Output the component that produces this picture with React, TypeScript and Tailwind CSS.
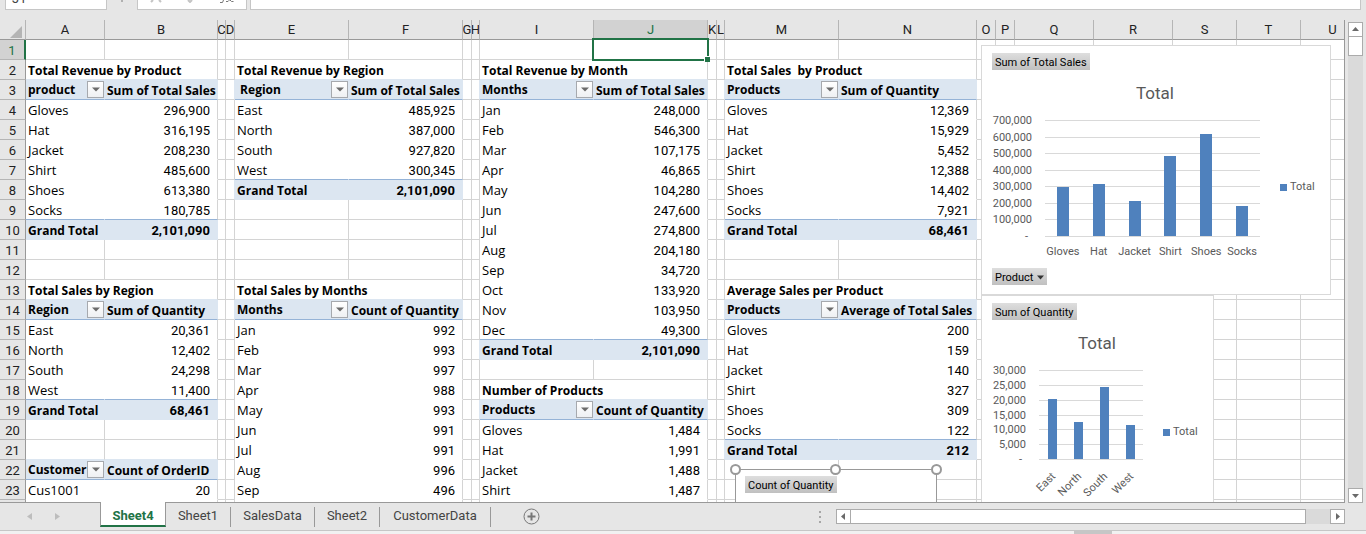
import React from "react";

type Kind = "grid" | "title" | "head" | "body" | "total";

interface Pivot {
  col: number;
  row: number;
  title?: string;
  heads: [string, string];
  rows: [string, string][];
  total?: string;
}

const columns: { name: string; width: string }[] = [
  { name: "A", width: "w-[79px]" },
  { name: "B", width: "w-[113px]" },
  { name: "C", width: "w-[8px]" },
  { name: "D", width: "w-[9px]" },
  { name: "E", width: "w-[114px]" },
  { name: "F", width: "w-[114px]" },
  { name: "G", width: "w-[9px]" },
  { name: "H", width: "w-[8px]" },
  { name: "I", width: "w-[114px]" },
  { name: "J", width: "w-[114px]" },
  { name: "K", width: "w-[9px]" },
  { name: "L", width: "w-[8px]" },
  { name: "M", width: "w-[114px]" },
  { name: "N", width: "w-[138px]" },
  { name: "O", width: "w-[19px]" },
  { name: "P", width: "w-[19px]" },
  { name: "Q", width: "w-[79px]" },
  { name: "R", width: "w-[79px]" },
  { name: "S", width: "w-[64px]" },
  { name: "T", width: "w-[64px]" },
  { name: "U", width: "w-[64px]" },
];

const pivots: Pivot[] = [
  {
    col: 0, row: 3, title: "Total Revenue by Product", heads: ["product", "Sum of Total Sales"],
    rows: [["Gloves", "296,900"], ["Hat", "316,195"], ["Jacket", "208,230"], ["Shirt", "485,600"], ["Shoes", "613,380"], ["Socks", "180,785"]],
    total: "2,101,090",
  },
  {
    col: 0, row: 14, title: "Total Sales by Region", heads: ["Region", "Sum of Quantity"],
    rows: [["East", "20,361"], ["North", "12,402"], ["South", "24,298"], ["West", "11,400"]],
    total: "68,461",
  },
  { col: 0, row: 22, heads: ["Customer", "Count of OrderID"], rows: [["Cus1001", "20"], ["", ""]] },
  {
    col: 4, row: 3, title: "Total Revenue by Region", heads: [" Region", "Sum of Total Sales"],
    rows: [["East", "485,925"], ["North", "387,000"], ["South", "927,820"], ["West", "300,345"]],
    total: "2,101,090",
  },
  {
    col: 4, row: 14, title: "Total Sales by Months", heads: ["Months", "Count of Quantity"],
    rows: [["Jan", "992"], ["Feb", "993"], ["Mar", "997"], ["Apr", "988"], ["May", "993"], ["Jun", "991"], ["Jul", "991"], ["Aug", "996"], ["Sep", "496"], ["", ""]],
  },
  {
    col: 8, row: 3, title: "Total Revenue by Month", heads: ["Months", "Sum of Total Sales"],
    rows: [["Jan", "248,000"], ["Feb", "546,300"], ["Mar", "107,175"], ["Apr", "46,865"], ["May", "104,280"], ["Jun", "247,600"], ["Jul", "274,800"], ["Aug", "204,180"], ["Sep", "34,720"], ["Oct", "133,920"], ["Nov", "103,950"], ["Dec", "49,300"]],
    total: "2,101,090",
  },
  {
    col: 8, row: 19, title: "Number of Products", heads: ["Products", "Count of Quantity"],
    rows: [["Gloves", "1,484"], ["Hat", "1,991"], ["Jacket", "1,488"], ["Shirt", "1,487"], ["", ""]],
  },
  {
    col: 12, row: 3, title: "Total Sales  by Product", heads: ["Products", "Sum of Quantity"],
    rows: [["Gloves", "12,369"], ["Hat", "15,929"], ["Jacket", "5,452"], ["Shirt", "12,388"], ["Shoes", "14,402"], ["Socks", "7,921"]],
    total: "68,461",
  },
  {
    col: 12, row: 14, title: "Average Sales per Product", heads: ["Products", "Average of Total Sales"],
    rows: [["Gloves", "200"], ["Hat", "159"], ["Jacket", "140"], ["Shirt", "327"], ["Shoes", "309"], ["Socks", "122"]],
    total: "212",
  },
];

interface Cell {
  kind: Kind;
  text: string;
  label: boolean;
}

const cells = new Map<string, Cell>();
const put = (row: number, col: number, kind: Kind, pair: [string, string]) => {
  cells.set(`${row},${col}`, { kind, text: pair[0], label: true });
  cells.set(`${row},${col + 1}`, { kind, text: pair[1], label: false });
};
pivots.forEach((p) => {
  if (p.title) cells.set(`${p.row - 1},${p.col}`, { kind: "title", text: p.title, label: true });
  put(p.row, p.col, "head", p.heads);
  p.rows.forEach((r, i) => put(p.row + 1 + i, p.col, "body", r));
  if (p.total) put(p.row + 1 + p.rows.length, p.col, "total", ["Grand Total", p.total]);
});

const kindAt = (row: number, col: number): Kind => cells.get(`${row},${col}`)?.kind ?? "grid";
const filled = (k: Kind) => k === "head" || k === "total";

function bottomEdge(row: number, col: number) {
  const own = kindAt(row, col);
  const below = kindAt(row + 1, col);
  if (own === "head" || below === "total") return "border-b-[#95b3d7]";
  if (own === "total" || below === "head") return "border-b-[#dce6f1]";
  if (own === "body") return "border-b-white";
  return "border-b-[#d4d4d4]";
}

function rightEdge(row: number, col: number) {
  const own = kindAt(row, col);
  const next = kindAt(row, col + 1);
  if (filled(own) || filled(next)) return "border-r-[#dce6f1]";
  if (own === "body" && next === "body") return "border-r-white";
  return "border-r-[#d4d4d4]";
}

function FilterButton({ name }: { name: string }) {
  return (
    <button type="button" aria-label={`Filter ${name.trim()}`} className="flex h-[17px] w-[17px] shrink-0 items-center justify-center border border-[#a6a9ae] bg-linear-to-b from-white to-[#eef0f3]">
      <svg width="8" height="5" viewBox="0 0 8 5"><path d="M0 0.5h8L4 4.5z" fill="#6b6b6b" /></svg>
    </button>
  );
}

function SheetCell({ row, col }: { row: number; col: number }) {
  const cell = cells.get(`${row},${col}`);
  const kind = cell?.kind ?? "grid";
  const numeric = cell !== undefined && !cell.label && kind !== "head";
  const filterable = cell !== undefined && cell.label && kind === "head";
  const lowered = numeric || (kind !== "body" && !filterable);
  const weight = kind !== "body" ? "font-bold" : "font-normal";
  const face = numeric
    ? "justify-end pr-[7px] text-[13px]"
    : kind === "body"
      ? "pl-[2px] font-['Open_Sans',sans-serif] text-[13px]"
      : "pl-[2px] font-['Open_Sans',sans-serif] text-[12px]";
  const fill = filled(kind) ? "bg-[#dce6f1]" : "bg-white";
  return (
    <td colSpan={kind === "title" ? 2 : 1} className={`h-5 overflow-hidden border-r border-b p-0 ${fill} ${rightEdge(row, kind === "title" ? col + 1 : col)} ${bottomEdge(row, col)}`}>
      {cell && (
        <div className={`flex h-[19px] items-center whitespace-pre leading-[18px] ${lowered ? "pt-[2px]" : ""} ${weight} ${face}`}>
          {filterable ? (
            <>
              <span className="h-[19px] min-w-0 flex-1 overflow-hidden pt-px">{cell.text}</span>
              <FilterButton name={cell.text} />
            </>
          ) : (
            cell.text
          )}
        </div>
      )}
    </td>
  );
}

function Sheet() {
  const rows = Array.from({ length: 24 }, (_, i) => i + 1);
  return (
    <table className="w-[1365px] table-fixed border-separate border-spacing-0 text-[13px] leading-[19px] text-black">
      <colgroup>
        <col className="w-[26px]" />
        {columns.map((c) => <col key={c.name} className={c.width} />)}
      </colgroup>
      <thead>
        <tr>
          <th aria-label="Select all" className="h-5 border-r border-b border-r-[#b5b5b5] border-b-[#999999] bg-[#e6e6e6] p-0">
            <svg className="ml-2.5 mt-1" width="12" height="12" viewBox="0 0 12 12"><path d="M12 0v12H0z" fill="#b4b4b4" /></svg>
          </th>
          {columns.map((c) => (
            <th key={c.name} scope="col" className={`h-5 overflow-hidden border-r border-b border-r-[#b5b5b5] border-b-[#999999] p-0 font-normal ${c.name === "J" ? "bg-[#d2d2d2] text-[#217346]" : "bg-[#e6e6e6] text-[#222222]"}`}>
              <div className="flex h-[19px] items-center justify-center">{c.name}</div>
            </th>
          ))}
        </tr>
      </thead>
      <tbody>
        {rows.map((row) => (
          <tr key={row}>
            <th scope="row" className={`h-5 border-b border-b-[#b5b5b5] p-0 text-center font-normal ${row === 1 ? "border-r-2 border-r-[#217346] bg-[#d2d2d2] text-[#217346]" : "border-r border-r-[#999999] bg-[#e6e6e6] text-[#222222]"}`}>
              <div className="h-[19px] pt-0.5 leading-[18px]">{row < 24 ? row : ""}</div>
            </th>
            {columns.map((c, col) =>
              col > 0 && kindAt(row, col - 1) === "title" ? null : <SheetCell key={c.name} row={row} col={col} />
            )}
          </tr>
        ))}
      </tbody>
    </table>
  );
}

function FieldButton({ children, arrow, place }: { children: string; arrow?: boolean; place: string }) {
  return (
    <button type="button" className={`absolute flex h-[17px] items-center gap-1 bg-linear-to-b from-[#dedede] to-[#c0c0c0] px-[3px] pt-0.5 text-[11px] leading-[15px] whitespace-nowrap text-black ${place}`}>
      {children}
      {arrow && <svg width="7" height="5" viewBox="0 0 7 5"><path d="M0 0.5h7L3.5 4.5z" fill="#333" /></svg>}
    </button>
  );
}

interface ChartProps {
  label: string;
  width: number;
  height: number;
  ticks: string[];
  max: number;
  plot: { left: number; right: number; top: number; bottom: number };
  labelEnd: number;
  title: { x: number; y: number };
  legend: { x: number; y: number };
  barWidth: number;
  slanted?: boolean;
  data: [string, number][];
}

function BarChart({ label, width, height, ticks, max, plot, labelEnd, title, legend, barWidth, slanted, data }: ChartProps) {
  const step = (plot.bottom - plot.top) / (ticks.length - 1);
  const band = (plot.right - plot.left) / data.length;
  return (
    <svg role="img" aria-label={label} width={width} height={height} className="block fill-[#595959] text-[11px]">
      <text x={title.x} y={title.y} textAnchor="middle" className="text-[17px]">Total</text>
      {ticks.map((t, i) => {
        const y = Math.round(plot.top + i * step);
        return (
          <g key={t}>
            <rect x={plot.left} y={y} width={plot.right - plot.left} height="1" fill="#d9d9d9" />
            <text x={t === "-" ? labelEnd - 4 : labelEnd} y={y + 4} textAnchor="end">{t}</text>
          </g>
        );
      })}
      {data.map(([name, value], i) => {
        const center = plot.left + band * (i + 0.5);
        const h = Math.round((value / max) * (plot.bottom - plot.top));
        return (
          <g key={name}>
            <rect x={Math.round(center - barWidth / 2)} y={plot.bottom - h} width={barWidth} height={h} fill="#4f81bd" />
            {slanted ? (
              <text transform={`translate(${center + 4} ${plot.bottom + 18}) rotate(-45)`} textAnchor="end">{name}</text>
            ) : (
              <text x={center} y={plot.bottom + 19} textAnchor="middle">{name}</text>
            )}
          </g>
        );
      })}
      <rect x={legend.x} y={legend.y} width="7" height="7" fill="#4f81bd" />
      <text x={legend.x + 10} y={legend.y + 6}>Total</text>
    </svg>
  );
}

function Charts() {
  return (
    <>
      <figure className="absolute top-[275px] left-[981px] border border-[#d9d9d9] bg-white">
        <BarChart
          label="Sum of Quantity by region" width={231} height={240}
          ticks={["30,000", "25,000", "20,000", "15,000", "10,000", "5,000", "-"]} max={30000}
          plot={{ left: 57, right: 161, top: 74, bottom: 163 }} labelEnd={44}
          title={{ x: 115, y: 53 }} legend={{ x: 181, y: 133 }} barWidth={9} slanted
          data={[["East", 20361], ["North", 12402], ["South", 24298], ["West", 11400]]}
        />
        <FieldButton place="top-[7px] left-[10px]">Sum of Quantity</FieldButton>
      </figure>
      <figure className="absolute top-[25px] left-[981px] border border-[#d9d9d9] bg-white">
        <BarChart
          label="Sum of Total Sales by product" width={348} height={248}
          ticks={["700,000", "600,000", "500,000", "400,000", "300,000", "200,000", "100,000", "-"]} max={700000}
          plot={{ left: 63, right: 278, top: 74, bottom: 190 }} labelEnd={50}
          title={{ x: 173, y: 53 }} legend={{ x: 298, y: 138 }} barWidth={12}
          data={[["Gloves", 296900], ["Hat", 316195], ["Jacket", 208230], ["Shirt", 485600], ["Shoes", 613380], ["Socks", 180785]]}
        />
        <FieldButton place="top-[7px] left-[10px]">Sum of Total Sales</FieldButton>
        <FieldButton arrow place="top-[222px] left-[10px]">Product</FieldButton>
      </figure>
      <figure className="absolute top-[449px] left-[735px] h-40 w-[202px] border border-[#999999] bg-white">
        <FieldButton place="top-[6px] left-[9px]">Count of Quantity</FieldButton>
        <span className="absolute -top-1.5 -left-1.5 size-[11px] rounded-full border-2 border-[#999999] bg-white" />
        <span className="absolute -top-1.5 left-[94px] size-[11px] rounded-full border-2 border-[#999999] bg-white" />
        <span className="absolute -top-1.5 -right-1.5 size-[11px] rounded-full border-2 border-[#999999] bg-white" />
      </figure>
    </>
  );
}

function FormulaBar() {
  return (
    <div className="flex h-5 shrink-0 pl-[5px] pr-[5px]">
      <div className="flex h-2.5 w-[102px] items-end overflow-hidden border-b border-x border-[#c6c6c6] bg-white">
        <input aria-label="Name box" defaultValue="J1" className="h-[22px] w-full shrink-0 bg-transparent pl-1.5 text-[13px] text-[#444444] outline-none" />
      </div>
      <div className="flex h-2.5 w-[30px] items-start justify-center"><span className="h-0.5 w-0.5 bg-[#b0b0b0]" /></div>
      <div className="flex h-2.5 w-[110px] items-start justify-between overflow-hidden border-x border-b border-[#c6c6c6] bg-white pr-3 pl-3">
        <button type="button" aria-label="Cancel">
          <svg className="block" width="12" height="3" viewBox="0 0 12 3"><path d="M1 2l2-2M11 2L9 0" stroke="#c4c4c4" strokeWidth="2" /></svg>
        </button>
        <button type="button" aria-label="Enter">
          <svg className="block" width="12" height="3" viewBox="0 0 12 3"><path d="M3 0l2 2 2-2" stroke="#c4c4c4" strokeWidth="2" fill="none" /></svg>
        </button>
        <button type="button" aria-label="Insert function">
          <svg className="block" width="14" height="4" viewBox="0 0 14 4" fill="none" stroke="#777777"><path d="M0 2.5h2.5L3.5 0M6 1.5h2L9.5 0M10 0l1.5 1.5h2" /></svg>
        </button>
      </div>
      <div className="ml-[3px] flex h-2.5 flex-1 items-end overflow-hidden border-x border-b border-[#c6c6c6] bg-white">
        <input aria-label="Formula" className="h-[22px] w-full shrink-0 bg-transparent outline-none" />
      </div>
    </div>
  );
}

function ScrollButton({ name, path }: { name: string; path: string }) {
  return (
    <button type="button" aria-label={name} className="flex size-[15px] shrink-0 items-center justify-center border border-[#ababab] bg-white">
      <svg width="7" height="7" viewBox="0 0 7 7"><path d={path} fill="#6a6a6a" /></svg>
    </button>
  );
}

const tabs: { name: string; width: string }[] = [
  { name: "Sheet1", width: "w-[65px]" },
  { name: "SalesData", width: "w-[84px]" },
  { name: "Sheet2", width: "w-[65px]" },
  { name: "CustomerData", width: "w-[111px]" },
];

function TabBar() {
  return (
    <nav aria-label="Sheets" className="flex h-7 shrink-0 items-start border-b border-[#c6c6c6] pr-[21px] text-[13px] text-[#444444]">
      <div className="flex h-[26px] w-[100px] shrink-0 items-center gap-[23px] pl-[27px]">
        <button type="button" aria-label="Previous sheet"><svg width="5" height="7" viewBox="0 0 5 7"><path d="M5 0v7L0 3.5z" fill="#bdbdbd" /></svg></button>
        <button type="button" aria-label="Next sheet"><svg width="5" height="7" viewBox="0 0 5 7"><path d="M0 0v7l5-3.5z" fill="#bdbdbd" /></svg></button>
      </div>
      <button type="button" className="relative -mt-px h-[25px] w-[66px] shrink-0 border-x border-b-2 border-x-[#999999] border-b-[#217346] bg-white pt-1 font-bold text-[#217346]">Sheet4</button>
      {tabs.map((t) => (
        <button key={t.name} type="button" className={`mt-1 flex h-5 shrink-0 items-center justify-center border-r border-[#999999] pb-0.5 ${t.width}`}>{t.name}</button>
      ))}
      <button type="button" aria-label="New sheet" className="mt-[5px] ml-8 shrink-0">
        <svg width="17" height="17" viewBox="0 0 17 17" fill="none" stroke="#777777">
          <circle cx="8.5" cy="8.5" r="7.5" />
          <path d="M8.5 4.5v8M4.5 8.5h8" strokeWidth="2" />
        </svg>
      </button>
      <div className="ml-auto flex items-start">
        <svg className="mt-2 mr-[15px]" width="2" height="12" viewBox="0 0 2 12" fill="#a6a6a6"><path d="M0 0h2v2H0zM0 5h2v2H0zM0 10h2v2H0z" /></svg>
        <div className="mt-1.5 flex w-[509px] bg-[#dadada]">
          <ScrollButton name="Scroll left" path="M5 0v7L1 3.5z" />
          <div className="-ml-px h-[15px] w-[456px] border border-[#ababab] bg-white" />
          <div className="flex-1" />
          <ScrollButton name="Scroll right" path="M2 0v7l4-3.5z" />
        </div>
      </div>
    </nav>
  );
}

export default function App() {
  return (
    <div className="flex h-screen flex-col overflow-hidden bg-[#e6e6e6] font-[Roboto,sans-serif]">
      <FormulaBar />
      <div className="flex min-h-0 flex-1">
        <main className="relative min-w-0 flex-1 overflow-hidden border-r border-b border-[#999999]">
          <Sheet />
          <div aria-hidden="true" className="absolute top-[18px] left-[592px] h-[23px] w-[117px] border-2 border-[#217346]">
            <span className="absolute -right-[3px] -bottom-[3px] size-[6px] border-t border-l border-white bg-[#217346]" />
          </div>
          <Charts />
        </main>
        <div className="flex w-[21px] shrink-0 flex-col items-center pt-0.5">
          <div className="flex min-h-0 w-[15px] flex-1 flex-col bg-[#dadada]">
            <ScrollButton name="Scroll up" path="M0 5h7L3.5 1z" />
            <div className="-mt-px h-5 border border-[#ababab] bg-white" />
            <div className="flex-1" />
            <ScrollButton name="Scroll down" path="M0 2h7L3.5 6z" />
          </div>
        </div>
      </div>
      <TabBar />
      <footer className="flex h-[3px] shrink-0 justify-end bg-[#f1f1f1] pr-[254px]">
        <span className="w-[38px] bg-[#c6c6c6]" />
      </footer>
    </div>
  );
}
